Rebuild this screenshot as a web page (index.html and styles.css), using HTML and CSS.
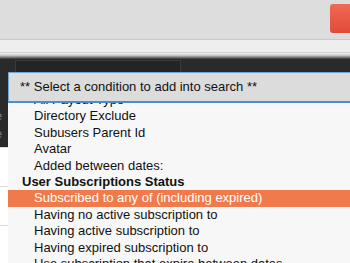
FILE: index.html
```html
<!DOCTYPE html>
<html>
<head>
  <link rel="stylesheet" href="styles.css">
</head>
<body>
  <div class="topbar">
    <div class="btn-red"></div>
  </div>
  <div class="strip"></div>
  <div class="shade"></div>

  <div class="workspace">
    <div class="side">
      <div class="side-dark">
        <span class="side-t top">t</span>
        <span class="side-g">e</span>
        <span class="side-g">e</span>
      </div>
      <div class="side-row"><span class="side-t">t</span></div>
      <div class="side-row"><span class="side-t">t</span></div>
      <div class="side-row"></div>
    </div>

    <div class="main">
      <div class="tabbar">
        <div class="tab"></div>
      </div>
      <div class="select">** Select a condition to add into search **</div>
      <div class="list">
        <div class="options">
          <div class="opt">All Payout Type</div>
          <div class="opt">Directory Exclude</div>
          <div class="opt">Subusers Parent Id</div>
          <div class="opt">Avatar</div>
          <div class="opt">Added between dates:</div>
          <div class="group">User Subscriptions Status</div>
          <div class="opt active">Subscribed to any of (including expired)</div>
          <div class="opt">Having no active subscription to</div>
          <div class="opt">Having active subscription to</div>
          <div class="opt">Having expired subscription to</div>
          <div class="opt">Use subscription that expire between dates</div>
        </div>
      </div>
    </div>
  </div>
</body>
</html>
```

FILE: styles.css
```css
body {
  margin: 0;
  width: 350px;
  height: 263px;
  overflow: hidden;
  background: #dddddd;
  font-family: "Liberation Sans", Arial, sans-serif;
  font-size: 13px;
  color: #111;
}
.topbar {
  height: 39px;
  display: flex;
  justify-content: flex-end;
  padding-top: 4px;
  box-sizing: border-box;
}
.btn-red {
  width: 24px;
  height: 29px;
  margin-right: -4px;
  border-radius: 3px;
  background: linear-gradient(#ee6a55, #e34a3a);
}
.strip {
  height: 12px;
  background: #eeeeee;
  border-top: 1px solid #c9c9c9;
  border-bottom: 1px solid #d2d2d2;
}
.shade {
  height: 6px;
  background: linear-gradient(#f2f2f2, #c8c8c8 40%, #333333);
}
.workspace {
  display: flex;
  height: 205px;
  background: #2a2a2a;
}
.side {
  width: 8px;
  display: flex;
  flex-direction: column;
  overflow: hidden;
}
.side-dark {
  height: 99px;
  background: #2a2a2a;
  display: flex;
  flex-direction: column;
  line-height: 18px;
}
.side-t {
  color: #1c2e5a;
  margin-left: -4px;
}
.side-t.top {
  margin-bottom: 30px;
}
.side-g {
  color: #777;
  margin-left: -5px;
}
.side-row {
  background: #ffffff;
  border-top: 1px solid #dadada;
  height: 36px;
  padding-top: 6px;
}
.main {
  flex: 1;
  display: flex;
  flex-direction: column;
  min-width: 0;
}
.tabbar {
  height: 13px;
  padding-left: 7px;
  padding-top: 1px;
  box-sizing: border-box;
}
.tab {
  width: 166px;
  height: 100%;
  background: #242424;
  border-left: 1px solid #3b3b3b;
  border-right: 1px solid #3b3b3b;
  border-top: 1px solid #3b3b3b;
  box-sizing: border-box;
}
.select {
  height: 31px;
  margin-right: -4px;
  box-sizing: border-box;
  background: #dcdcdc;
  border: 1px solid #6ea6d8;
  border-bottom: 2px solid #4b8ccc;
  padding-left: 11px;
  line-height: 28px;
  color: #111;
  white-space: nowrap;
}
.list {
  flex: 1;
  background: #f7f7f7;
  overflow: hidden;
}
.options {
  margin-top: -11px;
}
.opt, .group {
  height: 16.4px;
  line-height: 16.4px;
  white-space: nowrap;
}
.opt {
  padding-left: 26px;
}
.group {
  padding-left: 14px;
  font-weight: bold;
}
.opt.active {
  background: #f07a4b;
  color: #ffffff;
}
```
